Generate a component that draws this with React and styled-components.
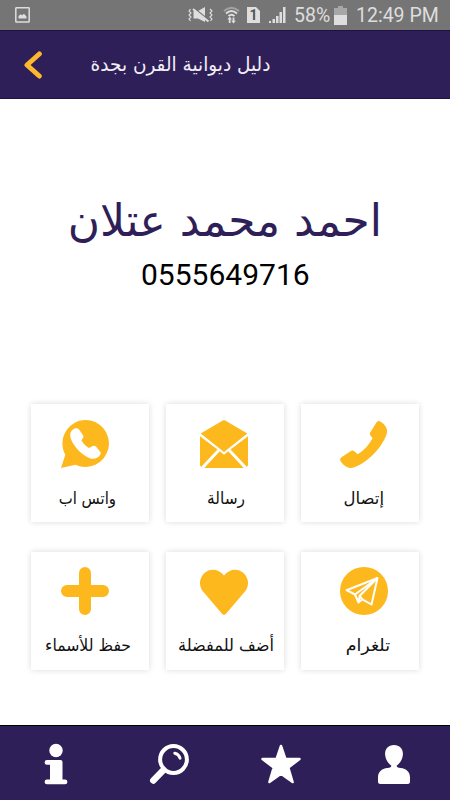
import React from 'react'
import styled, { createGlobalStyle } from 'styled-components'

const GlobalStyle = createGlobalStyle`
  :root {
    --primary: #2f1f59;
    --accent: #fdb81e;
    --status: #757575;
    --status-text: #dedede;
  }

  * {
    box-sizing: border-box;
  }

  body {
    margin: 0;
    background-color: #fff;
    font-family: Roboto, 'DejaVu Sans', sans-serif;
  }

  svg {
    display: block;
    flex-shrink: 0;
  }
`

const Screen = styled.div`
  display: flex;
  flex-direction: column;
  width: 450px;
  height: 800px;
  overflow: hidden;
`

const StatusBar = styled.header`
  display: flex;
  align-items: center;
  height: 30px;
  padding: 0 11px 0 15px;
  background-color: var(--status);
  color: var(--status-text);
  font-size: 19.5px;
  line-height: 30px;
  white-space: nowrap;

  .tray {
    display: flex;
    align-items: center;
    margin-left: auto;
  }
`

const StatusText = styled.span`
  width: ${({ $width }) => $width}px;
  margin-right: ${({ $gap = 0 }) => $gap}px;
  padding-top: 2px;
`

const Spacer = styled.span`
  width: ${({ $width }) => $width}px;
`

const TopBar = styled.div`
  display: flex;
  align-items: center;
  height: 69px;
  padding: 0 180px 0 24px;
  border-top: 1px solid #20123f;
  border-bottom: 1px solid #20123f;
  background-color: var(--primary);
`

const ShapedText = styled.span`
  display: block;
  direction: rtl;
  white-space: nowrap;
  transform: scale(${({ $scale = 1 }) => $scale}, ${({ $stretch = 1 }) => $stretch});
  transform-origin: right center;
`

const Title = styled.h1`
  margin: 0 0 0 auto;
  color: #f1eef6;
  font: 400 18px/24px 'DejaVu Sans', sans-serif;
`

const Profile = styled.section`
  display: flex;
  flex-direction: column;
  height: 305px;
  padding: 92px 68px 0 0;

  .name {
    height: 60px;
    margin: 0;
    color: var(--primary);
    font: 400 42px/60px 'DejaVu Sans', sans-serif;
  }

  .phone {
    margin: 6px 0 0 141px;
    color: #000;
    font-size: 30px;
    line-height: 36px;
  }
`

const Actions = styled.div`
  display: grid;
  grid-template-columns: repeat(3, 118px);
  grid-auto-rows: 118px;
  gap: 30px 17px;
  padding-left: 31px;
`

const Card = styled.div`
  padding-top: ${({ $top = 16 }) => $top}px;
  background-color: #fff;
  box-shadow: 0 0 6px rgba(0, 0, 0, 0.15);

  svg {
    margin-left: ${({ $left }) => $left}px;
  }
`

const Label = styled.div`
  margin-top: 19px;
  padding-right: ${({ $right }) => $right}px;
  color: #111;
  font: 400 16px/24px 'DejaVu Sans', sans-serif;
`

const BottomNav = styled.nav`
  display: grid;
  grid-template-columns: repeat(4, 112.5px);
  height: 75px;
  margin-top: auto;
  padding-top: 17px;
  border-top: 1px solid #000;
  background-color: var(--primary);
  color: #fff;

  svg {
    margin: 0 auto;
  }

  .active {
    color: var(--accent);
  }
`

const PictureIcon = () => (
  <svg width="15" height="16" viewBox="0 0 15 16">
    <rect x="0.8" y="0.8" width="13.4" height="14.2" rx="0.6" fill="none" stroke="#dedede" strokeWidth="1.5" />
    <path d="M3.5 11.5V9.2L5.3 7.2L7 8.2L9 6.8L11.5 9.4V11.5Z" fill="#dedede" />
  </svg>
)

const MuteIcon = () => (
  <svg width="25" height="18" viewBox="0 0 25 18">
    <path d="M5.5 5H10L17 1V16L10 12.5H5.5Z" fill="#dedede" />
    <path d="M4.5 1.2L21 14.2" stroke="#757575" strokeWidth="1.6" />
    <path d="M5 3L20.5 15.5" stroke="#dedede" strokeWidth="2" />
    <path d="M2.5 3L1 5L3 7L1 9L3 11L1 13L2.5 15M22 3L24 5L22 7L24 9L22 11L24 13L22.5 15" fill="none" stroke="#dedede" strokeWidth="1.1" />
  </svg>
)

const WifiIcon = () => (
  <svg width="17" height="18" viewBox="0 0 17 18">
    <g fill="none" strokeWidth="2">
      <path d="M1 5Q8.5 -1.5 16 5" stroke="#a4a4a4" />
      <path d="M3 7.5Q8.5 2.5 14 7.5" stroke="#dedede" />
      <path d="M5.5 10Q8.5 7.5 11.5 10" stroke="#dedede" />
    </g>
    <path d="M6.7 10.5L9 13.5H7.6V17H5.8V13.5H4.4ZM10.5 17.5L8.2 14.7H9.6V11.5H11.4V14.7H12.8Z" fill="#dedede" />
  </svg>
)

const Sim = styled.span`
  width: 13px;
  height: 16px;
  margin: 0 9px 0 7px;
  background-color: var(--status-text);
  clip-path: polygon(0 0, 9px 0, 100% 4px, 100% 100%, 0 100%);
  color: #555;
  font: 700 14px/17px Roboto, sans-serif;
  text-align: center;
`

const SignalIcon = () => (
  <svg width="17" height="16" viewBox="0 0 17 16">
    <path d="M0 14H2V16H0ZM3.5 12H6V16H3.5ZM7 9H9.5V16H7ZM10.5 5H13V16H10.5ZM14 0H16.5V16H14Z" fill="#dedede" />
  </svg>
)

const BatteryIcon = () => (
  <svg width="13" height="19" viewBox="0 0 13 19">
    <path d="M4 0H9V2H13V9H0V2H4Z" fill="#a7a7a7" />
    <path d="M0 9H13V19H0Z" fill="#dedede" />
  </svg>
)

const BackIcon = () => (
  <svg width="18" height="28" viewBox="0 0 18 28">
    <path d="M15.3 3L3 14L15.3 25" fill="none" stroke="#fdb92d" strokeWidth="5" strokeLinecap="round" strokeLinejoin="round" />
  </svg>
)

const WhatsappIcon = () => (
  <svg width="48" height="48" viewBox="0 0 48 48">
    <path d="M24.5 0A23.5 23.5 0 1 1 14.5 44.8L0 48L4.3 34.8A23.5 23.5 0 0 1 24.5 0Z" fill="#fdb81e" />
    <path d="M10.5 11C8.2 13.5 9 18.5 12.5 24C17 31 23.5 36.5 29.5 38.4C33.5 39.5 37 38 39 35.2C40 33.5 39.9 32.4 38.8 31.2L35.2 26.8C33.8 25.2 32.2 25.4 30.8 26.6L28 28C25 26.5 21.8 23.3 20.4 20.3L21.8 18.3C22.8 17 22.6 15.9 21.6 14.5L18.2 9.8C16.9 8 15.2 7.9 13.5 8.6C12.3 9.1 11.4 9.9 10.5 11Z" fill="#fff" />
  </svg>
)

const MailIcon = () => (
  <svg width="48" height="48" viewBox="0 0 48 48" fill="#fdb81e">
    <path d="M22.8 0.6Q24 -0.2 25.2 0.6L47.3 13.5L24 32L0.7 13.5Z" />
    <path d="M0 16.2L17.5 29.5L1.3 46.7Q0 46.3 0 45Z" />
    <path d="M48 16.2L30.5 29.5L46.7 46.7Q48 46.3 48 45Z" />
    <path d="M19.8 31.2L24 34.7L28.2 31.2L43.7 48H4.3Z" />
  </svg>
)

const CallIcon = () => (
  <svg width="48" height="48" viewBox="0 0 48 48">
    <path d="M1.2 37.4L10.9 31Q12.7 30 14.2 31.3L17.7 34.2C23.7 30.5 29 25 32.6 18.2L30.5 15.5Q29.4 14 30.2 12.4L36.6 2.2Q38.2 0.2 40.2 1.6C45.5 5 48.3 9 46.6 14.2C42.5 26.5 29 41.5 14.5 47.2C9.4 49 4.8 47.3 1 41.8Q-0.8 39 1.2 37.4Z" fill="#fdb81e" />
  </svg>
)

const PlusIcon = () => (
  <svg width="48" height="48" viewBox="0 0 48 48">
    <path d="M24 6V42M6 24H42" stroke="#fdb81e" strokeWidth="12" strokeLinecap="round" />
  </svg>
)

const HeartIcon = () => (
  <svg width="48" height="48" viewBox="0 0 48 48">
    <path d="M24 8.5C29.5 1.2 38.5 1.2 43.5 6C49.4 11.5 49.3 19.5 44.5 25L26 46.8Q24 49 22 46.8L3.5 25C-1.3 19.5 -1.4 11.5 4.5 6C9.5 1.2 18.5 1.2 24 8.5Z" fill="#fdb81e" />
  </svg>
)

const TelegramIcon = () => (
  <svg width="48" height="48" viewBox="0 0 48 48">
    <circle cx="24" cy="24" r="24" fill="#fdb81e" />
    <g fill="none" stroke="#fff" strokeWidth="2" strokeLinejoin="round">
      <path d="M37.5 11L6.5 23.2L15 27.5L18.5 35.5L22.3 32.3L31.5 37.5Z" />
      <path d="M37.5 11L15 27.5M37.5 11L19.7 28.8L22.3 32.3M19.7 28.8L18.5 35.5" />
    </g>
  </svg>
)

const InfoIcon = () => (
  <svg width="42" height="42" viewBox="0 0 42 42" fill="currentColor">
    <circle cx="21" cy="7.5" r="6.7" />
    <path d="M12 17H25.5Q27.5 17 27.5 19V36.5H30A2.3 2.3 0 0 1 30 41.3H12A2.3 2.3 0 0 1 12 36.5H15V21.8H12A2.4 2.4 0 0 1 12 17Z" />
  </svg>
)

const SearchIcon = () => (
  <svg width="42" height="42" viewBox="0 0 42 42" fill="none" stroke="currentColor" strokeLinecap="round">
    <circle cx="25.5" cy="16.5" r="13.4" strokeWidth="4" />
    <path d="M15.5 27L5.3 37.5" strokeWidth="6.5" />
    <path d="M26.8 10.2Q31 11.2 32 15.2" strokeWidth="3" />
  </svg>
)

const StarIcon = () => (
  <svg width="42" height="42" viewBox="0 0 42 42">
    <path d="M21 3L25.4 16H39.5L28.3 24.6L32.6 39L21 30.8L9.4 39L13.7 24.6L2.5 16H16.6Z" fill="currentColor" stroke="currentColor" strokeWidth="2.5" strokeLinejoin="round" />
  </svg>
)

const UserIcon = () => (
  <svg width="42" height="42" viewBox="0 0 42 42">
    <path d="M21 2C26.8 2 30.2 6 29.9 11.5C29.6 16.5 27 20.3 23.6 22.8C23.8 24.5 25.5 24.8 27.5 25C33.5 25.5 37 29 37 34.5V38.5Q37 41 34.5 41H7.5Q5 41 5 38.5V34.5C5 29 8.5 25.5 14.5 25C16.5 24.8 18.2 24.5 18.4 22.8C15 20.3 12.4 16.5 12.1 11.5C11.8 6 15.2 2 21 2Z" fill="currentColor" />
  </svg>
)

const actions = [
  { label: 'واتس اب', Icon: WhatsappIcon, left: 30, right: 33, scale: 0.93 },
  { label: 'رسالة', Icon: MailIcon, left: 34, right: 39, scale: 0.96 },
  { label: 'إتصال', Icon: CallIcon, left: 39, right: 35, scale: 1.03 },
  { label: 'حفظ للأسماء', Icon: PlusIcon, left: 30, right: 18, scale: 0.98, top: 15 },
  { label: 'أضف للمفضلة', Icon: HeartIcon, left: 34, right: 10, scale: 1.01, top: 15 },
  { label: 'تلغرام', Icon: TelegramIcon, left: 39, right: 29, scale: 1.09, top: 15 },
]

export default function App() {
  return (
    <>
      <GlobalStyle />
      <Screen>
        <StatusBar>
          <PictureIcon />
          <div className="tray">
            <MuteIcon />
            <Spacer $width={10} />
            <WifiIcon />
            <Sim>1</Sim>
            <SignalIcon />
            <Spacer $width={8} />
            <StatusText $width={36} $gap={4}>58%</StatusText>
            <BatteryIcon />
            <Spacer $width={9} />
            <StatusText $width={83}>12:49 PM</StatusText>
          </div>
        </StatusBar>

        <TopBar>
          <BackIcon />
          <Title>
            <ShapedText $scale={1.025} $stretch={1.08}>دليل ديوانية القرن بجدة</ShapedText>
          </Title>
        </TopBar>

        <Profile>
          <p className="name">
            <ShapedText $scale={1.047} $stretch={1.06}>احمد محمد عتلان</ShapedText>
          </p>
          <p className="phone">0555649716</p>
        </Profile>

        <Actions>
          {actions.map(({ label, Icon, left, right, scale, top }) => (
            <Card key={label} $left={left} $top={top}>
              <Icon />
              <Label $right={right}>
                <ShapedText $scale={scale} $stretch={1.04}>{label}</ShapedText>
              </Label>
            </Card>
          ))}
        </Actions>

        <BottomNav>
          <InfoIcon />
          <SearchIcon />
          <StarIcon />
          <UserIcon className="active" />
        </BottomNav>
      </Screen>
    </>
  )
}
